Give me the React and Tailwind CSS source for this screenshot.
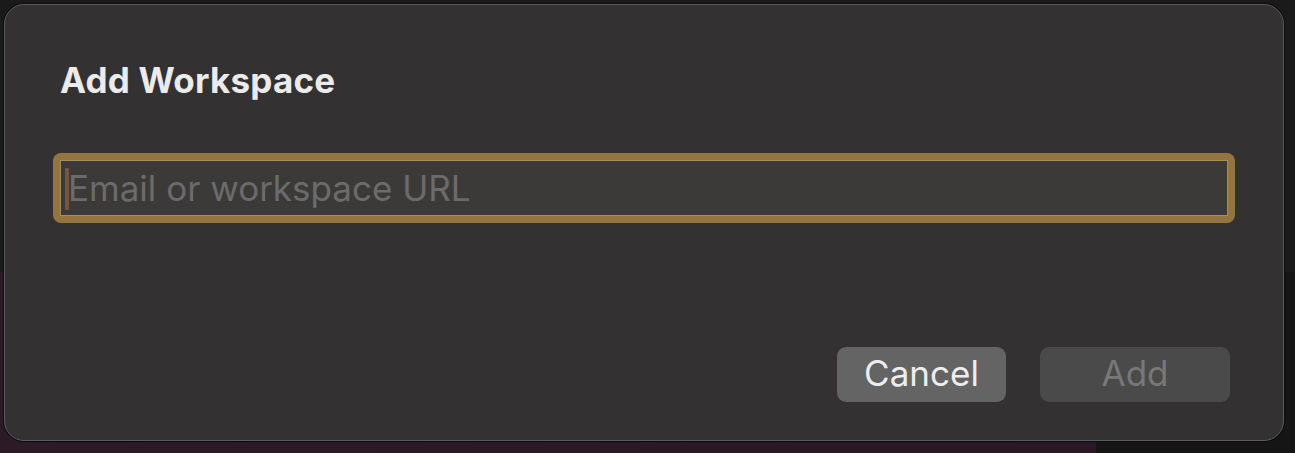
export default function App() {
  return (
    <div
      className="w-[1295px] h-[453px] overflow-hidden pt-[4px] pl-[4px] bg-[linear-gradient(to_bottom,#1a1a1a_0%,#1a1a1a_60%,transparent_60%),linear-gradient(90deg,#2c1a26_0%,#2a1924_84.6%,#151515_84.6%)]"
      style={{ fontFamily: 'Inter, "Liberation Sans", sans-serif' }}
    >
      {/* Dialog */}
      <div className="w-[1280px] h-[437px] rounded-[20px] bg-[#333132] border border-[#5d5c5c] shadow-[0_0_0_1px_#0c0c0c] flex flex-col">
        <h1 className="pl-[55px] pt-[58px] text-[35px] leading-none font-bold text-[#ebebeb] tracking-[0.2px]">
          Add Workspace
        </h1>

        {/* Input with focus ring */}
        <div className="ml-[48px] mt-[55px] w-[1182px] h-[70px] rounded-[8px] bg-[#94743f] p-[7px]">
          <div className="h-full w-full border border-[#a98c5c] bg-[#3b3a39] flex items-center pl-[4px] pt-[1px]">
            <span className="w-[4px] h-[42px] bg-[#7a5437] rounded-[1px]" />
            <span className="ml-[-1px] text-[35px] leading-none text-[#6c6b6b]">
              Email or workspace URL
            </span>
          </div>
        </div>

        {/* Buttons */}
        <div className="mt-auto pb-[38px] pr-[53px] flex justify-end gap-[34px]">
          <button className="w-[169px] h-[55px] rounded-[9px] bg-[#646464] text-[35px] leading-none text-[#ededed] pb-[2px]">
            Cancel
          </button>
          <button className="w-[190px] h-[55px] rounded-[9px] bg-[#4a4a4a] text-[35px] leading-none text-[#787878] pb-[2px]">
            Add
          </button>
        </div>
      </div>
    </div>
  );
}
